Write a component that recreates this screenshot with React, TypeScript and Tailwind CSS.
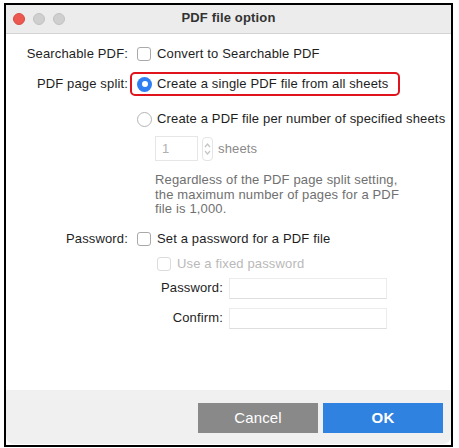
import React from "react";

const font = { fontFamily: '"Liberation Sans", Arial, sans-serif' };

function Checkbox({ disabled = false }: { disabled?: boolean }) {
  return (
    <div
      className={
        "w-[14px] h-[14px] rounded-[3px] border bg-white shrink-0 " +
        (disabled ? "border-[#dcdcdc]" : "border-[#a9a9a9]")
      }
    />
  );
}

function Radio({ checked = false }: { checked?: boolean }) {
  if (checked) {
    return (
      <div className="w-[15px] h-[15px] rounded-full bg-[#2f7ff2] flex items-center justify-center shrink-0">
        <div className="w-[6px] h-[6px] rounded-full bg-white" />
      </div>
    );
  }
  return <div className="w-[15px] h-[15px] rounded-full border border-[#b5b5b5] bg-white shrink-0" />;
}

export default function App() {
  return (
    <div className="w-[459px] h-[448px] bg-white pt-[3px] pl-[4px]" style={font}>
      <div className="w-[449px] h-[444px] border-2 border-black bg-white flex flex-col overflow-hidden text-[13px] tracking-[0.15px] whitespace-nowrap text-[#1e1e1e]">
        {/* title bar */}
        <div className="relative h-[29px] bg-[#ececec] border-b border-[#d4d4d4] flex items-center justify-center shrink-0">
          <div className="absolute left-[7px] top-[8px] flex gap-[8px]">
            <div className="w-[12px] h-[12px] rounded-full bg-[#ec5850] border border-[#d84a42]" />
            <div className="w-[12px] h-[12px] rounded-full bg-[#cfcfcf] border border-[#c2c2c2]" />
            <div className="w-[12px] h-[12px] rounded-full bg-[#cfcfcf] border border-[#c2c2c2]" />
          </div>
          <div className="font-bold text-[#333333] text-[13px] -mt-[2px]">PDF file option</div>
        </div>

        {/* Row 1 */}
        <div className="flex items-center h-[20px] mt-[10px]">
          <div className="w-[122px] text-right">Searchable PDF:</div>
          <div className="ml-[9px] flex items-center gap-[6px]">
            <Checkbox />
            <span>Convert to Searchable PDF</span>
          </div>
        </div>

        {/* Row 2 */}
        <div className="flex items-center h-[24px] mt-[8px]">
          <div className="w-[122px] text-right">PDF page split:</div>
          <div className="ml-[2px] w-[270px] h-[24px] border-2 border-[#e0141c] rounded-[5px] flex items-center pl-[5px] gap-[5px]">
            <Radio checked />
            <span>Create a single PDF file from all sheets</span>
          </div>
        </div>

        {/* Row 3 */}
        <div className="flex items-center h-[20px] mt-[13px] pl-[131px] gap-[5px]">
          <Radio />
          <span>Create a PDF file per number of specified sheets</span>
        </div>

        {/* number row */}
        <div className="flex items-center h-[25px] mt-[7px] pl-[149px]">
          <div className="w-[43px] h-[25px] border border-[#e6e6e6] bg-white text-[#b0b0b0] flex items-center pl-[6px]">1</div>
          <div className="ml-[4px] w-[11px] h-[24px] rounded-[4px] border border-[#e4e4e4] flex flex-col items-center justify-center">
            <svg width="9" height="20" viewBox="0 0 9 20">
              <path d="M2 8 L4.5 5 L7 8" fill="none" stroke="#c4c4c4" strokeWidth="1.2" />
              <path d="M2 12 L4.5 15 L7 12" fill="none" stroke="#c4c4c4" strokeWidth="1.2" />
            </svg>
          </div>
          <span className="ml-[5px] text-[#8a8a8a]">sheets</span>
        </div>

        {/* paragraph */}
        <div className="pl-[149px] mt-[12px] text-[#707070] leading-[14.5px] w-[440px]">
          Regardless of the PDF page split setting,
          <br />
          the maximum number of pages for a PDF
          <br />
          file is 1,000.
        </div>

        {/* Password row */}
        <div className="flex items-center h-[20px] mt-[12px]">
          <div className="w-[122px] text-right">Password:</div>
          <div className="ml-[9px] flex items-center gap-[6px]">
            <Checkbox />
            <span>Set a password for a PDF file</span>
          </div>
        </div>

        {/* Use fixed password */}
        <div className="flex items-center h-[20px] mt-[5px] pl-[151px] gap-[6px] text-[#b9b9b9]">
          <Checkbox disabled />
          <span>Use a fixed password</span>
        </div>

        {/* password input */}
        <div className="flex items-center h-[21px] mt-[4px]">
          <div className="w-[217px] text-right">Password:</div>
          <div className="ml-[6px] w-[158px] h-[21px] border border-[#ececec] border-b-[#dedede] bg-white" />
        </div>
        <div className="flex items-center h-[21px] mt-[9px]">
          <div className="w-[217px] text-right">Confirm:</div>
          <div className="ml-[6px] w-[158px] h-[21px] border border-[#ececec] border-b-[#dedede] bg-white" />
        </div>

        {/* bottom bar */}
        <div className="mt-auto h-[54px] bg-[#f0f0f0] rounded-b-[8px] flex justify-end items-start pt-[13px] pr-[8px] gap-[5px] mb-[1px]">
          <div className="w-[120px] h-[30px] bg-[#898989] text-white text-[15px] flex items-center justify-center">Cancel</div>
          <div className="w-[120px] h-[30px] bg-[#2f82e0] text-white text-[15px] font-bold flex items-center justify-center">OK</div>
        </div>
      </div>
    </div>
  );
}
